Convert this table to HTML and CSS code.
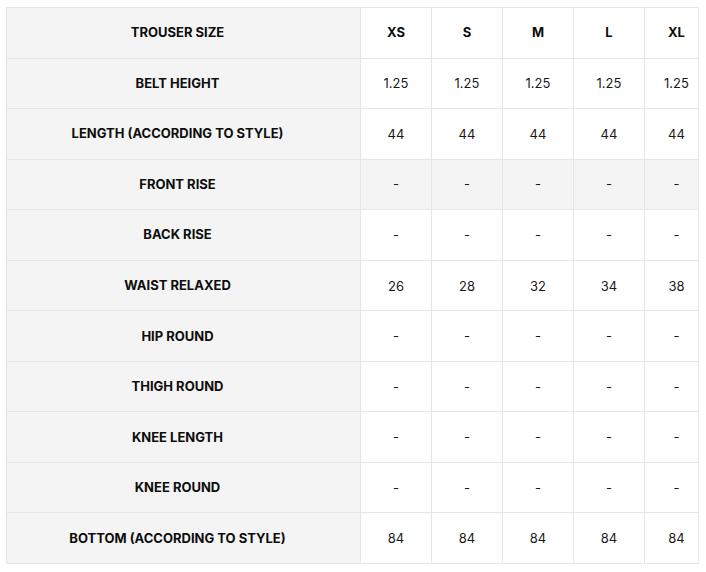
FILE: index.html
```html
<!DOCTYPE html>
<html lang="en">
<head>
<meta charset="utf-8">
<title>Trouser size chart</title>
<link rel="stylesheet" href="styles.css">
</head>
<body>
<div class="chart">
  <table class="size-table">
    <colgroup>
      <col class="col-label">
      <col class="col-size"><col class="col-size"><col class="col-size"><col class="col-size"><col class="col-last">
    </colgroup>
    <thead>
      <tr>
        <th class="label">TROUSER SIZE</th>
        <th>XS</th><th>S</th><th>M</th><th>L</th><th>XL</th>
      </tr>
    </thead>
    <tbody>
      <tr><th class="label">BELT HEIGHT</th><td>1.25</td><td>1.25</td><td>1.25</td><td>1.25</td><td>1.25</td></tr>
      <tr><th class="label">LENGTH (ACCORDING TO STYLE)</th><td>44</td><td>44</td><td>44</td><td>44</td><td>44</td></tr>
      <tr class="hl"><th class="label">FRONT RISE</th><td>-</td><td>-</td><td>-</td><td>-</td><td>-</td></tr>
      <tr><th class="label">BACK RISE</th><td>-</td><td>-</td><td>-</td><td>-</td><td>-</td></tr>
      <tr><th class="label">WAIST RELAXED</th><td>26</td><td>28</td><td>32</td><td>34</td><td>38</td></tr>
      <tr><th class="label">HIP ROUND</th><td>-</td><td>-</td><td>-</td><td>-</td><td>-</td></tr>
      <tr><th class="label">THIGH ROUND</th><td>-</td><td>-</td><td>-</td><td>-</td><td>-</td></tr>
      <tr><th class="label">KNEE LENGTH</th><td>-</td><td>-</td><td>-</td><td>-</td><td>-</td></tr>
      <tr><th class="label">KNEE ROUND</th><td>-</td><td>-</td><td>-</td><td>-</td><td>-</td></tr>
      <tr class="last"><th class="label">BOTTOM (ACCORDING TO STYLE)</th><td>84</td><td>84</td><td>84</td><td>84</td><td>84</td></tr>
    </tbody>
  </table>
</div>
</body>
</html>
```
FILE: styles.css
```css
html, body {
  margin: 0;
  padding: 0;
  background: #ffffff;
}
body {
  padding: 7px 0 0 6px;
  font-family: Inter, "Noto Sans", sans-serif;
  color: #111111;
}
.chart {
  width: 691px;
  border: 1px solid #e6e6e6;
  overflow: hidden;
}
.size-table {
  table-layout: fixed;
  width: 702px;
  border-collapse: separate;
  border-spacing: 0;
}
.col-label { width: 354px; }
.col-size { width: 71px; }
.col-last { width: 64px; }
.size-table th,
.size-table td {
  box-sizing: border-box;
  height: 50.55px;
  padding: 0;
  text-align: center;
  vertical-align: middle;
  border-right: 1px solid #e6e6e6;
  border-bottom: 1px solid #e6e6e6;
}
.size-table tr.last th,
.size-table tr.last td {
  border-bottom: 0;
  height: 49.55px;
}
.size-table th {
  font-size: 13px;
  font-weight: 700;
  letter-spacing: 0;
  color: #0d0d0d;
  padding-bottom: 1px;
}
.size-table th.label {
  background: #f4f4f4;
  padding-right: 12px;
}
.size-table td {
  font-size: 13px;
  font-weight: 400;
  color: #1a1a1a;
}
.size-table tr.hl td {
  background: #f4f4f4;
}
```
